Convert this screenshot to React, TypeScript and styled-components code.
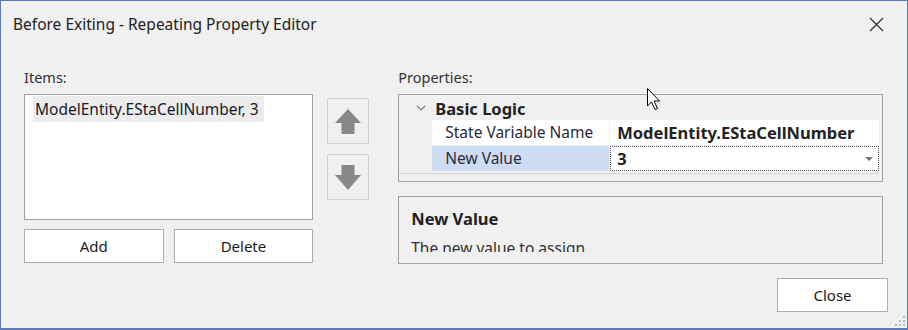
import React from 'react';
import styled, { createGlobalStyle } from 'styled-components';

const colors = {
  frame: '#5a7cb6',
  face: '#f0f0f0',
  border: '#a0a0a0',
  text: '#1b1b1b',
  select: '#cddcf3',
};

const GlobalStyle = createGlobalStyle`
  html, body {
    margin: 0;
    padding: 0;
    background: ${colors.face};
  }
  body {
    font-family: "Noto Sans", "Open Sans", sans-serif;
    color: ${colors.text};
  }
`;

const Window = styled.div`
  position: relative;
  box-sizing: border-box;
  width: 908px;
  height: 330px;
  background: ${colors.face};
  border: 1px solid ${colors.frame};
  border-bottom-width: 2px;
  display: flex;
  flex-direction: column;
  overflow: hidden;
`;

const TitleBar = styled.div`
  height: 46px;
  display: flex;
  align-items: center;
  justify-content: space-between;
  padding: 0 23px 0 12px;
  font-size: 15.5px;
  color: #222;
`;

const CloseX = styled.svg`
  width: 15px;
  height: 15px;
`;

const Body = styled.div`
  display: flex;
  padding: 20px 24px 0 23px;
`;

const Column = styled.div<{ $width: number }>`
  width: ${(p) => p.$width}px;
  display: flex;
  flex-direction: column;
`;

const Label = styled.div`
  height: 20px;
  line-height: 20px;
  font-size: 14.5px;
  color: #333;
  margin-bottom: 7px;
`;

const ListBox = styled.div`
  box-sizing: border-box;
  height: 126px;
  background: #fff;
  border: 1px solid ${colors.border};
  padding: 1px 8px;
`;

const ListItem = styled.div`
  display: inline-block;
  background: #ececec;
  padding: 0 5px 0 2px;
  height: 26px;
  line-height: 26px;
  font-size: 15.5px;
  color: #1a1a2a;
`;

const ButtonRow = styled.div`
  display: flex;
  gap: 10px;
  margin-top: 9px;
`;

const Button = styled.button<{ $width?: number }>`
  box-sizing: border-box;
  width: ${(p) => (p.$width ? `${p.$width}px` : 'auto')};
  flex: ${(p) => (p.$width ? 'none' : '1')};
  height: 34px;
  background: #fff;
  border: 1px solid #adadad;
  font-family: inherit;
  font-size: 15px;
  color: ${colors.text};
  padding: 0;
`;

const ArrowColumn = styled.div`
  display: flex;
  flex-direction: column;
  gap: 10px;
  margin: 31px 29px 0 14px;
`;

const ArrowButton = styled.div`
  box-sizing: border-box;
  width: 42px;
  height: 46px;
  border: 1px solid #cfcfcf;
  display: flex;
  align-items: center;
  justify-content: center;
`;

const Grid = styled.div`
  box-sizing: border-box;
  height: 88px;
  border: 1px solid ${colors.border};
  background: ${colors.face};
  padding: 1px 3px 0 0;
  display: flex;
  flex-direction: column;
`;

const Category = styled.div`
  height: 24px;
  display: flex;
  align-items: center;
  font-size: 16.5px;
  font-weight: 700;
  color: #222;
  svg {
    margin: 0 9px 0 17px;
  }
`;

const Row = styled.div`
  display: flex;
  height: 25px;
  margin-left: 33px;
  border-bottom: 1px solid ${colors.face};
`;

const NameCell = styled.div<{ $selected?: boolean }>`
  width: 178px;
  box-sizing: border-box;
  padding-left: 13px;
  background: ${(p) => (p.$selected ? colors.select : '#fff')};
  border-right: 1px solid ${colors.face};
  font-size: 15.5px;
  line-height: 24px;
  color: #2a2a3a;
  white-space: nowrap;
`;

const ValueCell = styled.div<{ $focused?: boolean }>`
  flex: 1;
  box-sizing: border-box;
  position: relative;
  background: #fff;
  padding-left: 6px;
  font-size: 16.5px;
  font-weight: 700;
  line-height: 23px;
  color: #222;
  white-space: nowrap;
  border: 1px ${(p) => (p.$focused ? 'dotted #555' : 'solid transparent')};
`;

const Caret = styled.span`
  position: absolute;
  right: 5px;
  top: 10px;
  width: 0;
  height: 0;
  border-left: 4px solid transparent;
  border-right: 4px solid transparent;
  border-top: 4px solid #777;
`;

const GridFooter = styled.div`
  margin-top: 1px;
  border-top: 1px solid #d4d4d4;
  flex: 1;
`;

const Description = styled.div`
  box-sizing: border-box;
  height: 68px;
  margin-top: 14px;
  border: 1px solid ${colors.border};
  padding: 10px 12px 0;
`;

const DescClip = styled.div`
  height: 45px;
  overflow: hidden;
`;

const DescTitle = styled.div`
  font-size: 16.5px;
  font-weight: 700;
  line-height: 24px;
  color: #222;
`;

const DescText = styled.div`
  margin-top: 7px;
  font-size: 15.5px;
  line-height: 20px;
  color: #333;
`;

const Footer = styled.div`
  display: flex;
  justify-content: flex-end;
  padding: 14px 19px 0 0;
`;

const Pointer = styled.svg`
  position: absolute;
  left: 646px;
  top: 87px;
`;

const Grip = styled.svg`
  position: absolute;
  right: 1px;
  bottom: 1px;
`;

const UpArrow = () => (
  <svg width="26" height="25" viewBox="0 0 26 25">
    <polygon points="13,0 26,14 19.5,14 19.5,25 6.5,25 6.5,14 0,14" fill="#888" />
  </svg>
);

const DownArrow = () => (
  <svg width="26" height="25" viewBox="0 0 26 25">
    <polygon points="6.5,0 19.5,0 19.5,10 26,10 13,25 0,10 6.5,10" fill="#888" />
  </svg>
);

export default function App() {
  return (
    <>
      <GlobalStyle />
      <Window>
        <TitleBar>
          <span>Before Exiting - Repeating Property Editor</span>
          <CloseX viewBox="0 0 15 15">
            <path d="M1 1 L14 14 M14 1 L1 14" stroke="#333" strokeWidth="1.3" fill="none" />
          </CloseX>
        </TitleBar>
        <Body>
          <Column $width={290}>
            <Label>Items:</Label>
            <ListBox>
              <ListItem>ModelEntity.EStaCellNumber, 3</ListItem>
            </ListBox>
            <ButtonRow>
              <Button>Add</Button>
              <Button>Delete</Button>
            </ButtonRow>
          </Column>
          <ArrowColumn>
            <ArrowButton>
              <UpArrow />
            </ArrowButton>
            <ArrowButton>
              <DownArrow />
            </ArrowButton>
          </ArrowColumn>
          <Column $width={486}>
            <Label>Properties:</Label>
            <Grid>
              <Category>
                <svg width="10" height="6" viewBox="0 0 10 6">
                  <path d="M1 1 L5 5 L9 1" stroke="#777" strokeWidth="1.2" fill="none" />
                </svg>
                Basic Logic
              </Category>
              <Row>
                <NameCell>State Variable Name</NameCell>
                <ValueCell>ModelEntity.EStaCellNumber</ValueCell>
              </Row>
              <Row>
                <NameCell $selected>New Value</NameCell>
                <ValueCell $focused>
                  3
                  <Caret />
                </ValueCell>
              </Row>
              <GridFooter />
            </Grid>
            <Description>
              <DescClip>
                <DescTitle>New Value</DescTitle>
                <DescText>The new value to assign.</DescText>
              </DescClip>
            </Description>
          </Column>
        </Body>
        <Footer>
          <Button $width={111}>Close</Button>
        </Footer>
        <Pointer width="14" height="24" viewBox="0 0 14 24">
          <path
            d="M0.5 0.5 L0.5 18 L4.5 14 L8 21.5 L10.5 20.5 L7 13 L12.5 13 Z"
            fill="#fff"
            stroke="#000"
            strokeWidth="1"
          />
        </Pointer>
        <Grip width="12" height="12" viewBox="0 0 12 12">
          {[
            [9, 1],
            [9, 5],
            [5, 5],
            [9, 9],
            [5, 9],
            [1, 9],
          ].map(([x, y]) => (
            <rect key={`${x}-${y}`} x={x} y={y} width="2" height="2" fill="#b8b8b8" />
          ))}
        </Grip>
      </Window>
    </>
  );
}
